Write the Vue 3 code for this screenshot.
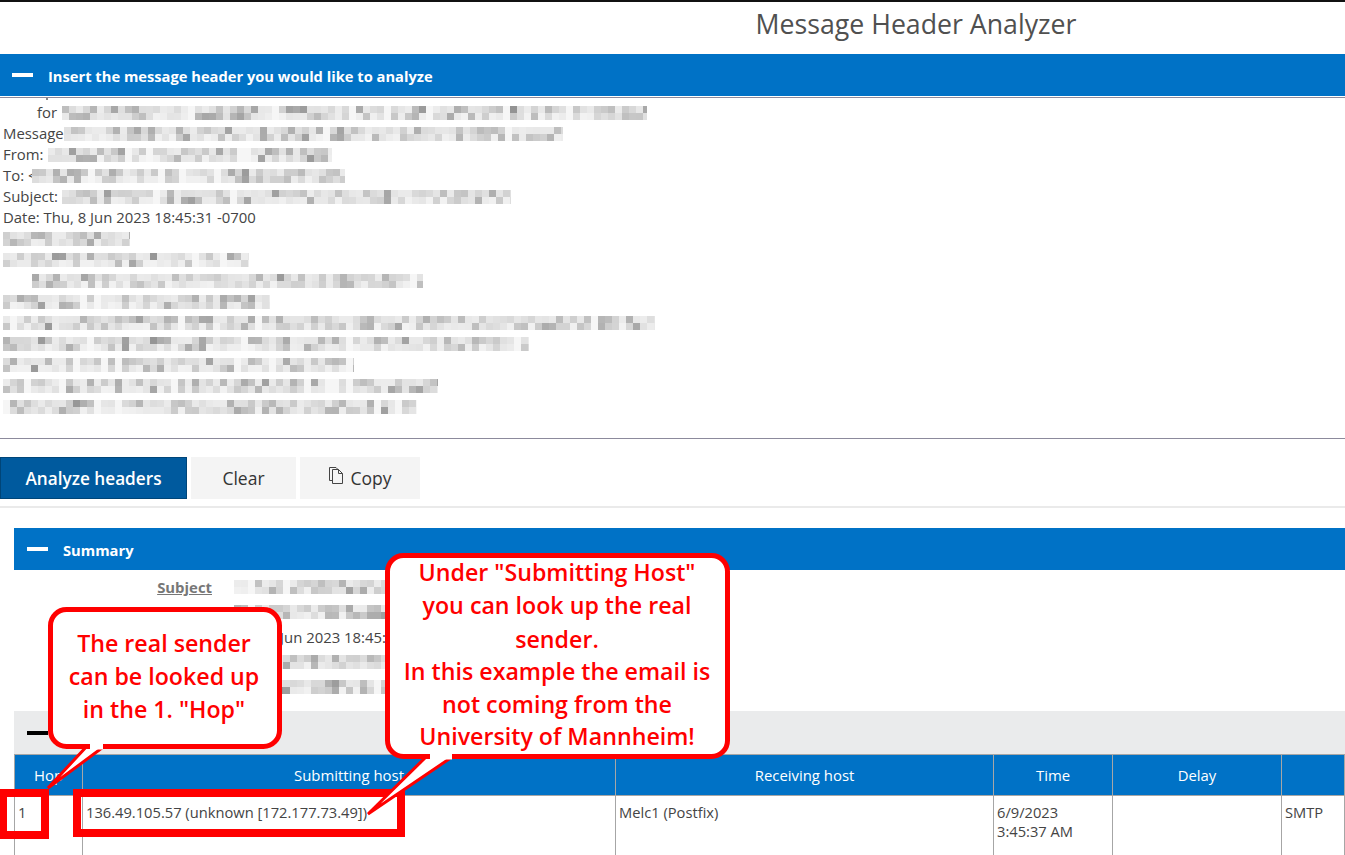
<template>
  <div class="page">
    <h1 class="title">Message Header Analyzer</h1>

    <header class="bar">
      <span class="dash"></span>
      <span class="bar-label">Insert the message header you would like to analyze</span>
    </header>

    <section class="raw">
      <div class="raw-cut"><i></i></div>
      <div v-for="(line, i) in rawLines" :key="i" class="raw-line" :style="{ paddingLeft: line.x + 'px' }">
        <span v-if="line.text" class="raw-text">{{ line.text }}</span>
        <svg v-if="line.w" class="blur" :width="line.w" height="18" :style="{ left: line.bx + 'px' }" shape-rendering="crispEdges">
          <rect v-for="(c, j) in mosaic(line.w, i + 3)" :key="j" :x="c.x" :y="c.y" width="7" height="7" :fill="c.fill" />
        </svg>
      </div>
    </section>

    <div class="buttons">
      <button class="btn primary">Analyze headers</button>
      <button class="btn clear">Clear</button>
      <button class="btn copy">
        <svg class="copy-icon" width="17" height="18" viewBox="0 0 17 18" fill="none" stroke="#444" stroke-width="1">
          <path d="M4.5 14.5H1.5V1.5H8L11 4.5" />
          <path d="M4.5 3.5H10.5L14.5 7.5V17.5H4.5Z" fill="#f4f4f4" />
          <path d="M10.5 3.5V7.5H14.5" />
        </svg>
        Copy
      </button>
    </div>

    <section class="results">
      <header class="bar summary-bar">
        <span class="dash"></span>
        <span class="bar-label">Summary</span>
      </header>

      <dl class="summary">
        <div v-for="(row, i) in summary" :key="i" class="summary-row">
          <dt>{{ row.label }}</dt>
          <dd>
            <span v-if="row.text" class="date-part">{{ row.text }}</span>
            <svg v-else class="blur-inline" :width="row.w" height="18" shape-rendering="crispEdges">
              <rect v-for="(c, j) in mosaic(row.w, row.seed)" :key="j" :x="c.x" :y="c.y" width="7" height="7" :fill="c.fill" />
            </svg>
          </dd>
        </div>
      </dl>

      <div class="received-bar"><span class="dash black"></span></div>

      <table class="hops">
        <colgroup>
          <col style="width: 68px" />
          <col style="width: 533px" />
          <col style="width: 378px" />
          <col style="width: 119px" />
          <col style="width: 169px" />
          <col />
        </colgroup>
        <thead>
          <tr>
            <th>Hop</th>
            <th>Submitting host</th>
            <th>Receiving host</th>
            <th>Time</th>
            <th>Delay</th>
            <th></th>
          </tr>
        </thead>
        <tbody>
          <tr>
            <td>1</td>
            <td>136.49.105.57 (unknown [172.177.73.49])</td>
            <td>Melc1 (Postfix)</td>
            <td>6/9/2023<br />3:45:37 AM</td>
            <td></td>
            <td>SMTP</td>
          </tr>
        </tbody>
      </table>
    </section>

    <!-- annotations lying over the screenshot -->
    <svg class="notes" width="1345" height="855">
      <rect x="3" y="793" width="42" height="42" class="mark" />
      <rect x="77" y="793" width="324" height="40" class="mark" />

      <path class="tail" d="M88 745L48 788L106 745Z" />
      <rect class="bubble" x="50.5" y="609.5" width="229" height="137" rx="16" />
      <line class="tail-gap" x1="90" y1="746.5" x2="103" y2="746.5" />
      <text class="note-text" text-anchor="middle">
        <tspan x="164" y="652">The real sender</tspan>
        <tspan x="164" y="685">can be looked up</tspan>
        <tspan x="164" y="718">in the 1. "Hop"</tspan>
      </text>

      <path class="tail" d="M428 755L368 814L455 755Z" />
      <rect class="bubble" x="387.5" y="555.5" width="340" height="201" rx="16" />
      <line class="tail-gap" x1="430" y1="756.5" x2="452" y2="756.5" />
      <text class="note-text" text-anchor="middle">
        <tspan x="557" y="581">Under "Submitting Host"</tspan>
        <tspan x="557" y="614">you can look up the real</tspan>
        <tspan x="557" y="648">sender.</tspan>
        <tspan x="557" y="680">In this example the email is</tspan>
        <tspan x="557" y="713">not coming from the</tspan>
        <tspan x="557" y="745">University of Mannheim!</tspan>
      </text>
    </svg>
  </div>
</template>

<script setup>
// lines of the pasted header, the private parts are pixelated like in the screenshot
const rawLines = [
  { x: 37, text: 'for', bx: 62, w: 585 },
  { x: 3, text: 'Message', bx: 64, w: 499 },
  { x: 3, text: 'From: I', bx: 48, w: 284 },
  { x: 3, text: 'To: <', bx: 32, w: 313 },
  { x: 3, text: 'Subject:', bx: 62, w: 449 },
  { x: 3, text: 'Date: Thu, 8 Jun 2023 18:45:31 -0700' },
  { x: 3, bx: 3, w: 127 },
  { x: 3, bx: 3, w: 246 },
  { x: 3, bx: 32, w: 391 },
  { x: 3, bx: 3, w: 267 },
  { x: 3, bx: 3, w: 652 },
  { x: 3, bx: 3, w: 526 },
  { x: 3, bx: 3, w: 351 },
  { x: 3, bx: 3, w: 435 },
  { x: 3, bx: 3, w: 414 }
]

// the other labels sit behind the red callout
const summary = [
  { label: 'Subject', w: 300, seed: 41 },
  { label: '', w: 300, seed: 42 },
  { label: '', text: 'Jun 2023 18:45:' },
  { label: '', w: 300, seed: 43 },
  { label: '', w: 300, seed: 44 }
]

function mosaic(width, seed) {
  let s = seed * 7919 + 13
  const next = () => {
    s = (s * 16807) % 2147483647
    return s / 2147483647
  }
  const cells = []
  for (let x = 0; x < width; x += 7) {
    const gap = next() < 0.06
    let row = 0
    for (let y = 2; y < 16; y += 7) {
      const dark = next() * next() * 95
      const grey = gap ? 246 : Math.round(236 - dark + row * 6)
      cells.push({ x, y, fill: `rgb(${grey},${grey},${grey})` })
      row++
    }
  }
  return cells
}
</script>

<style scoped>
.page {
  position: relative;
  height: 855px;
  overflow: hidden;
  box-sizing: border-box;
  border-top: 2px solid #111;
  background: #fff;
  color: #444;
  font-family: "Open Sans", "Noto Sans", sans-serif;
  font-size: 14.9px;
}

.title {
  margin: 0;
  height: 52px;
  padding-left: 487px;
  box-sizing: border-box;
  font-size: 26.7px;
  line-height: 43px;
  font-weight: 400;
  text-align: center;
  color: #505050;
}

.bar {
  display: flex;
  align-items: center;
  height: 42px;
  padding-left: 12px;
  background: #0072c6;
  color: #fff;
  font-size: 14.7px;
  font-weight: 700;
}

.bar-label {
  padding-top: 1px;
}

.dash {
  width: 21px;
  height: 4px;
  margin-right: 15px;
  background: #fff;
}

.dash.black {
  background: #000;
  margin: 0;
}

.raw {
  height: 342px;
  margin-top: 1px;
  margin-bottom: 18px;
  overflow: hidden;
  box-sizing: border-box;
  border-top: 1px solid #8c8a9c;
  border-bottom: 1px solid #8c8a9c;
}

.raw-cut {
  height: 4px;
  padding-left: 46px;
}

.raw-cut i {
  display: block;
  width: 2px;
  height: 2px;
  background: #888;
}

.raw-line {
  position: relative;
  height: 21px;
  line-height: 21px;
  white-space: pre;
}

.blur {
  position: absolute;
  top: 2px;
}

.buttons {
  display: flex;
  gap: 4px;
  padding-bottom: 7px;
  border-bottom: 2px solid #eaeaea;
  margin-bottom: 20px;
}

.btn {
  height: 42px;
  border: 0;
  padding: 0;
  font-family: inherit;
  font-size: 17.5px;
  font-weight: 500;
  color: #333;
  background: #f4f4f4;
}

.primary {
  width: 187px;
  background: #005a9e;
  border: 1px solid #004578;
  color: #fff;
  font-size: 17.2px;
  font-weight: 600;
}

.clear {
  width: 105px;
}

.copy {
  width: 120px;
  display: flex;
  align-items: center;
  justify-content: center;
  gap: 5px;
}

.copy-icon {
  margin-top: -6px;
}

.results {
  margin-left: 14px;
}

.summary-bar {
  padding-left: 13px;
}

.summary {
  height: 141px;
  margin: 0;
  padding-top: 5px;
  box-sizing: border-box;
}

.summary-row {
  display: flex;
  height: 25px;
  line-height: 25px;
}

.summary-row dt {
  width: 198px;
  text-align: right;
  font-weight: 700;
  color: #777;
  text-decoration: underline;
  white-space: nowrap;
}

.summary-row dd {
  margin: 0 0 0 22px;
  white-space: nowrap;
}

.date-part {
  display: block;
  margin-left: 46px;
}

.blur-inline {
  display: block;
  margin-top: 3px;
}

.received-bar {
  display: flex;
  align-items: center;
  height: 43px;
  padding-left: 13px;
  background: #eaebec;
}

.hops {
  width: 1331px;
  table-layout: fixed;
  border-collapse: collapse;
}

.hops th {
  height: 40px;
  padding: 0;
  background: #0072c6;
  color: #fff;
  font-weight: 400;
  font-size: 14.9px;
  border: 1px solid #a6a6a6;
}

.hops td {
  height: 60px;
  padding: 7px 3px;
  box-sizing: border-box;
  vertical-align: top;
  line-height: 19px;
  font-size: 14.7px;
  border-left: 1px solid #a6a6a6;
  border-right: 1px solid #a6a6a6;
  overflow: hidden;
}

.notes {
  position: absolute;
  left: 0;
  top: -2px;
}

.mark {
  fill: none;
  stroke: #f00;
  stroke-width: 8;
}

.bubble {
  fill: #fff;
  stroke: #f00;
  stroke-width: 5;
}

.tail {
  fill: #fff;
  stroke: #f00;
  stroke-width: 3;
}

.tail-gap {
  stroke: #fff;
  stroke-width: 6;
}

.note-text {
  fill: #f00;
  font-family: "Open Sans", "Noto Sans", sans-serif;
  font-size: 23.2px;
  font-weight: 600;
}
</style>
